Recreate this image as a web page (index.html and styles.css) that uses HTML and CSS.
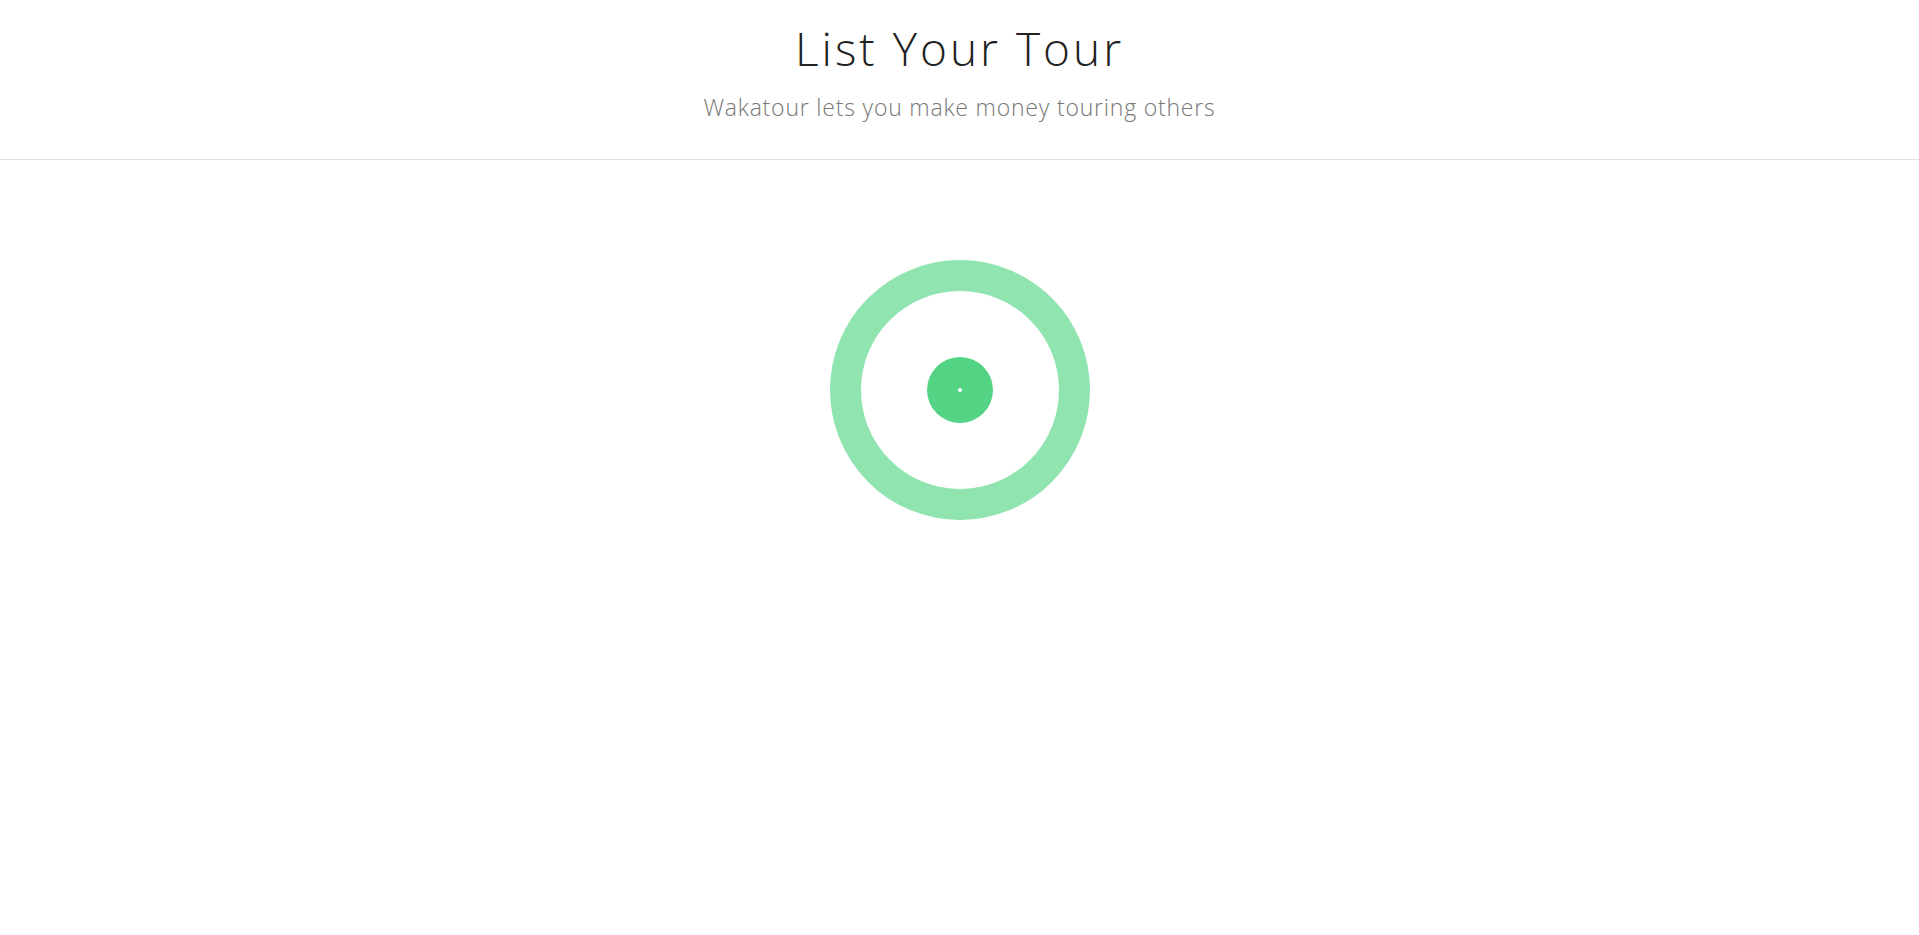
FILE: index.html
```html
<!DOCTYPE html>
<html>
<head>
  <title>List Your Tour</title>
  <link rel="stylesheet" href="styles.css">
</head>
<body>
<div class="header">
  <h1 class="title">List Your Tour</h1>
  <p class="subtitle">Wakatour lets you make money touring others</p>
</div>
<div class="loader">
  <div class="ring">
    <div class="dot"></div>
  </div>
</div>
</body>
</html>
```

FILE: styles.css
```css
body {
    margin: 0;
    background: #fff;
    font-family: 'Open Sans', 'Lato', sans-serif;
}
.header {
    height: 159px;
    border-bottom: 1px solid #e0e0e0;
    text-align: center;
}
.title {
    margin: 0;
    padding-top: 18px;
    font-size: 46px;
    font-weight: 300;
    line-height: 60px;
    color: #222;
    letter-spacing: 3px;
}
.subtitle {
    margin: 14px 0 0;
    font-size: 23px;
    font-weight: 300;
    line-height: 30px;
    color: #777;
    letter-spacing: 0.8px;
}
.loader {
    display: flex;
    justify-content: center;
    padding-top: 100px;
}
.ring {
    width: 198px;
    height: 198px;
    border: 31px solid #90e4b0;
    border-radius: 50%;
    display: flex;
    align-items: center;
    justify-content: center;
}
.dot {
    width: 66px;
    height: 66px;
    border-radius: 50%;
    background: #52d484;
    position: relative;
}
.dot::after {
    content: "";
    position: absolute;
    left: 31px;
    top: 31px;
    width: 4px;
    height: 4px;
    border-radius: 50%;
    background: #fff;
}
```
